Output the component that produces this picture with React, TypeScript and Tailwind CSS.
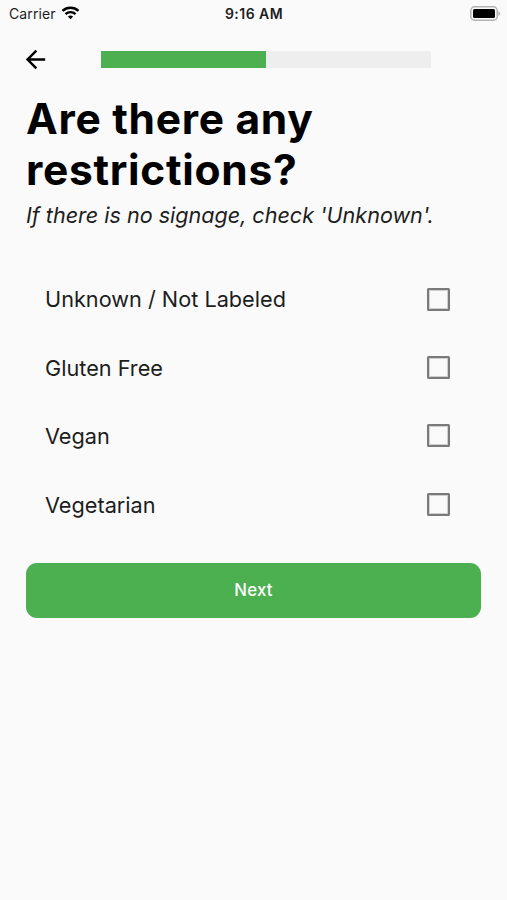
// Restrictions step of the food report form.
//
// Status bar, back arrow with progress, the question, a checkbox list
// and the button to the next step.
import { useState } from "react";

const OPTIONS = ["Unknown / Not Labeled", "Gluten Free", "Vegan", "Vegetarian"];

export default function App() {
  const [checked, setChecked] = useState<string[]>([]);

  const toggle = (option: string) =>
    setChecked((prev) =>
      prev.includes(option)
        ? prev.filter((o) => o !== option)
        : [...prev, option]
    );

  return (
    <div className="h-[900px] w-[507px] overflow-hidden bg-[#fafafa] font-['Inter',sans-serif] text-[#1d1d1d]">
      <StatusBar />

      {/* Back and progress */}
      <header className="flex h-[65px] items-center pl-[21px]">
        <button type="button" aria-label="Back">
          <BackArrow />
        </button>
        <div className="ml-[51px] h-[17px] w-[330px] bg-[#eeeeee]">
          <div className="h-full w-1/2 bg-[#4caf50]" />
        </div>
      </header>

      <main className="px-[26px] pt-px">
        <h1 className="text-[42.5px] leading-[51px] font-bold tracking-[0.7px] whitespace-nowrap text-black">
          Are there any
          <br />
          restrictions?
        </h1>
        <p className="mt-[7px] text-[21.6px] leading-[26px] tracking-[-0.02px] whitespace-nowrap italic">
          If there is no signage, check 'Unknown'.
        </p>

        {/* Options */}
        <ul className="mt-[37px]">
          {OPTIONS.map((option) => (
            <li key={option}>
              <label className="flex h-[68.4px] items-center justify-between pr-[31px] pl-[19px] text-[21.7px]">
                <span className="pt-px">{option}</span>
                <input
                  type="checkbox"
                  checked={checked.includes(option)}
                  onChange={() => toggle(option)}
                  className="h-[23px] w-[23px] appearance-none rounded-[1.5px] border-2 border-[#7a7a7a] shadow-[inset_0_0_0_1px_#cfcfcf] checked:border-[#4caf50] checked:bg-[#4caf50]"
                />
              </label>
            </li>
          ))}
        </ul>

        <button
          type="button"
          className="mt-[24px] h-[55px] w-full rounded-[11px] bg-[#4caf50] pt-px text-[16.8px] font-medium tracking-[0.2px] text-white"
        >
          Next
        </button>
      </main>
    </div>
  );
}

function StatusBar() {
  return (
    <div className="grid h-[27px] grid-cols-3 items-center pr-[6px] pl-[9px] text-[14px]">
      <div className="flex items-center gap-[5px]">
        <span className="tracking-[0.1px]">Carrier</span>
        <svg className="-mt-0.5" width="19" height="14" viewBox="0 0 18 14" fill="none" stroke="#000">
          <path d="M1 4.9C5.5.7 12.5.7 17 4.9" strokeWidth="2.5" />
          <path d="M4 8.1c2.8-2.6 7.2-2.6 10 0" strokeWidth="2.4" />
          <path d="M6.4 10.5c1.5-1.3 3.7-1.3 5.2 0L9 13.3z" fill="#000" stroke="none" />
        </svg>
      </div>
      <span className="pr-0.5 text-center font-semibold tracking-[0.45px]">9:16 AM</span>
      <svg className="justify-self-end" width="31" height="15" viewBox="0 0 31 15">
        <rect x=".8" y=".8" width="26.4" height="13.4" rx="3.8" fill="#fafafa" stroke="#b3b3b3" strokeWidth="1.5" />
        <rect x="3" y="3" width="22" height="9" rx="1.5" fill="#000" />
        <path d="M28.4 5v5c2.3-.8 2.3-4.2 0-5z" fill="#b3b3b3" />
      </svg>
    </div>
  );
}

function BackArrow() {
  return (
    <svg width="29" height="29" viewBox="0 0 24 24" fill="#000">
      <path d="M20 11H7.83l5.59-5.59L12 4l-8 8 8 8 1.41-1.41L7.83 13H20v-2z" />
    </svg>
  );
}
